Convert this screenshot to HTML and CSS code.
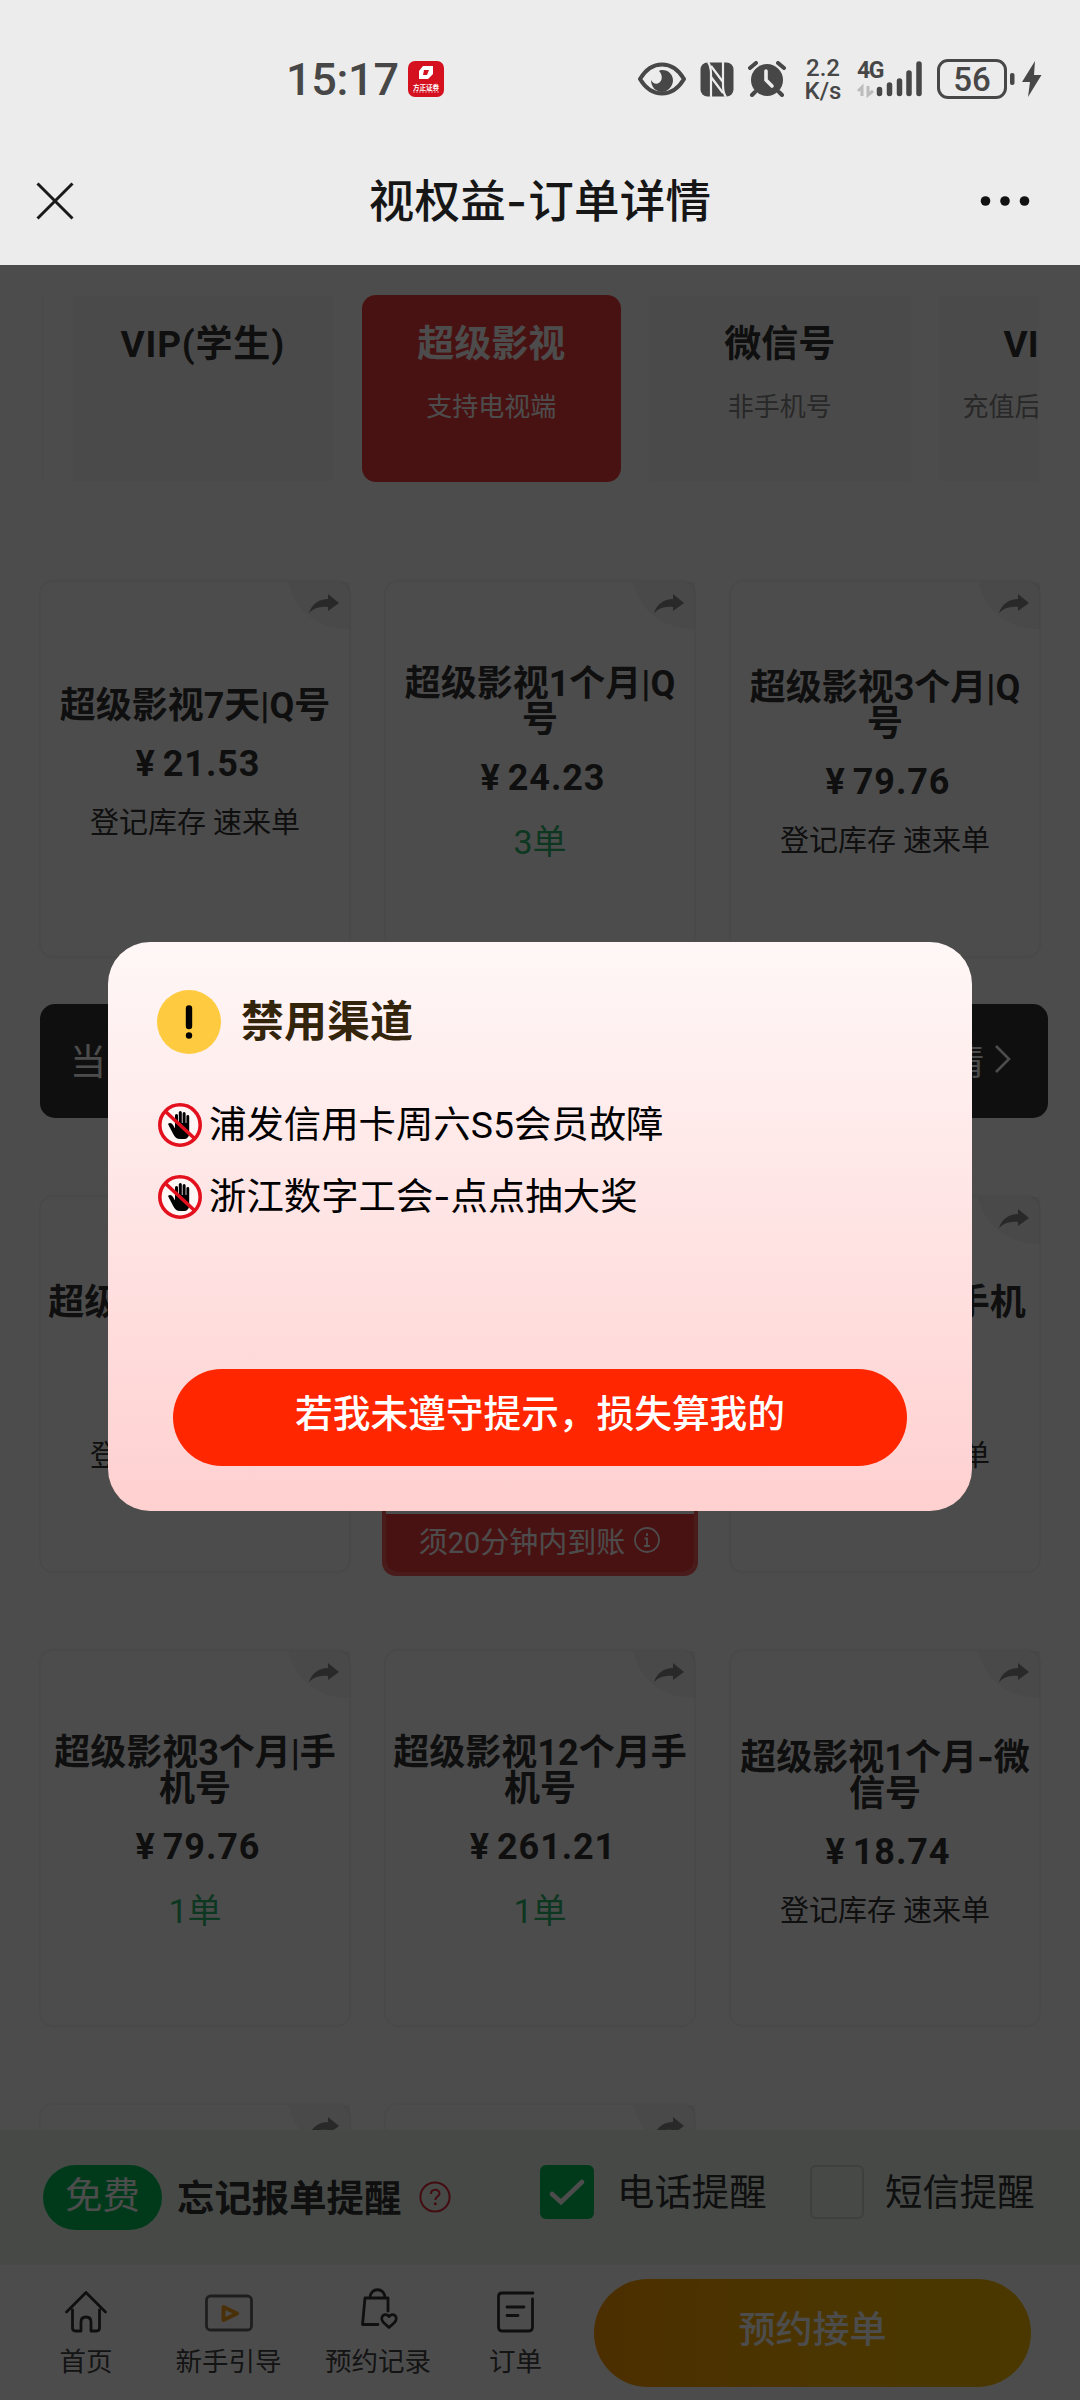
FILE: index.html
```html
<!DOCTYPE html>
<html lang="zh-CN">
<head>
<meta charset="utf-8">
<title>视权益-订单详情</title>
<link rel="stylesheet" href="styles.css">
</head>
<body>
<svg class="defs" width="0" height="0">
  <symbol id="share" viewBox="0 0 62 48">
    <path d="M0 0H62V47H56C27 45 6 27 0 0Z" fill="#000" fill-opacity=".045"/>
    <path d="M21 31C24 22 31 17 40 17V12L51 21L40 29V25C32 24 26 26 21 31Z" fill="#8a8a8a"/>
  </symbol>
  <symbol id="ban" viewBox="0 0 44 44">
    <circle cx="22" cy="22" r="20" fill="#fff6f6"/>
    <path d="M10 21c1.500-2 4-1 5 1l2 3.500V12.500a1.500 1.500 0 0 1 3 0V20h.8V9.500a1.500 1.500 0 0 1 3 0V20h.8V10.500a1.500 1.500 0 0 1 3 0V20h.8V13.500a1.400 1.400 0 0 1 2.800 0V30c0 4-2.500 6-5 6h-4c-3.500 0-5.500-2-7-5z" fill="#000"/>
    <path d="M8 9L36 35" stroke="#e3101d" stroke-width="3.600"/>
    <circle cx="22" cy="22" r="20.200" fill="none" stroke="#e3101d" stroke-width="3.600"/>
  </symbol>
</svg>

<header class="status">
  <div class="status-left">
    <span class="clock">15:17</span>
    <svg class="app" width="36" height="36" viewBox="0 0 36 36"><rect width="36" height="36" rx="7" fill="#d5101f"/><path fill="#fff" fill-rule="evenodd" d="M15 5H25V13L20 18H11V10ZM16 9L15 14H19L21 9Z"/><text x="5" y="28.500" font-size="6.600" textLength="26" fill="#fff" class="app-name">方正证券</text><path d="M5 31H31" stroke="#fff" stroke-opacity=".6" stroke-dasharray="2 1"/></svg>
  </div>
  <div class="status-right">
    <svg width="48" height="34" viewBox="0 0 48 34"><path d="M2 17C8 7 16 2.500 24 2.500S40 7 46 17C40 27 32 31.500 24 31.500S8 27 2 17Z" fill="none" stroke="#474747" stroke-width="4"/><path d="M24 8C31 8 35 13 35 18.500S30 30 24 30S13 25 13 18C15 22 19 23 22 20S24 12 21 9C22 8 23 8 24 8Z" fill="#474747"/></svg>
    <svg class="nfc" width="34" height="35" viewBox="0 0 34 35"><rect x=".5" y=".5" width="33" height="34" rx="7" fill="#474747"/><path d="M8 0Q11 4 11 12V35M26 35Q23 31 23 23V0" fill="none" stroke="#ececec" stroke-width="2.200"/><path d="M11 4L23 20M11 15L23 31" stroke="#ececec" stroke-width="2.200"/></svg>
    <svg class="alarm" width="38" height="36" viewBox="0 0 38 36"><circle cx="19" cy="19" r="16" fill="#474747"/><path d="M7 31L4 34M31 31L34 34M2 7L8 2M36 7L30 2" stroke="#474747" stroke-width="4" stroke-linecap="round"/><path d="M18 10V19L24 25" fill="none" stroke="#ececec" stroke-width="3.600" stroke-linecap="round"/></svg>
    <div class="speed"><span>2.2</span><span>K/s</span></div>
    <div class="signal">
      <svg width="66" height="38" viewBox="0 0 66 38"><path d="M22.500 29.500V33.500M32.500 25V33.500M42.500 21V33.500M52 13V33.500M62 4V33.500" stroke="#474747" stroke-width="5.500" stroke-linecap="round"/><path d="M1 31L5 27V36M11 26V35L16 31" stroke="#bcbcbc" stroke-width="3" fill="none"/></svg>
      <span>4G</span>
    </div>
    <div class="battery"><span>56</span></div>
    <svg class="nub" width="5" height="38" viewBox="0 0 5 38"><rect y="13" width="4.500" height="12" rx="2" fill="#474747"/></svg>
    <svg class="flash" width="20" height="38" viewBox="0 0 20 38"><path d="M13 1L0 22H8L6 37L19.500 15H12Z" fill="#474747"/></svg>
  </div>
</header>

<nav class="titlebar">
  <svg width="38" height="38" viewBox="0 0 38 38"><path d="M1.500 1.500L36.500 36.500M36.500 1.500L1.500 36.500" stroke="#1a1a1a" stroke-width="3"/></svg>
  <h1>视权益<span class="dash">-</span>订单详情</h1>
  <svg width="50" height="12" viewBox="0 0 50 12"><g fill="#111"><circle cx="5.500" cy="6" r="4.800"/><circle cx="25" cy="6" r="4.800"/><circle cx="44.500" cy="6" r="4.800"/></g></svg>
</nav>

<main class="page">
  <section class="scroll">
    <div class="tabs">
      <div class="tab edge"></div>
      <div class="tab"><b class="wide">VIP(学生)</b></div>
      <div class="tab active"><b>超级影视</b><small>支持电视端</small></div>
      <div class="tab"><b>微信号</b><small>非手机号</small></div>
      <div class="tab last"><b>VI</b><small>充值后</small></div>
    </div>

    <div class="grid">
      <article class="card"><svg class="share"><use href="#share"/></svg><h2>超级影视7天|Q号</h2><p class="price"><i>¥</i>21.53</p><p class="stock">登记库存 速来单</p></article>
      <article class="card"><svg class="share"><use href="#share"/></svg><h2>超级影视1个月|Q<br>号</h2><p class="price"><i>¥</i>24.23</p><p class="count">3单</p></article>
      <article class="card"><svg class="share"><use href="#share"/></svg><h2>超级影视3个月|Q<br>号</h2><p class="price"><i>¥</i>79.76</p><p class="stock">登记库存 速来单</p></article>
    </div>

    <div class="banner"><span>当</span><span class="more">情<svg width="18" height="30" viewBox="0 0 18 30"><path d="M2 2L15 15L2 28" fill="none" stroke="#fff" stroke-width="2.600"/></svg></span></div>

    <div class="grid second">
      <article class="card"><svg class="share"><use href="#share"/></svg><h2>超级影视15天手机<br>号</h2><p class="price"><i>¥</i>21.53</p><p class="stock">登记库存 速来单</p></article>
      <article class="card selected"><footer>须20分钟内到账<svg width="28" height="28" viewBox="0 0 28 28"><circle cx="14" cy="14" r="12" fill="none" stroke="#fff" stroke-width="1.800"/><path d="M14 7V10M11.500 12.500H14V20M11 20H17" fill="none" stroke="#fff" stroke-width="1.800"/></svg></footer></article>
      <article class="card"><svg class="share"><use href="#share"/></svg><h2>超级影视7天|手机<br>号</h2><p class="price"><i>¥</i>24.23</p><p class="stock">登记库存 速来单</p></article>
    </div>

    <div class="grid">
      <article class="card"><svg class="share"><use href="#share"/></svg><h2>超级影视3个月|手<br>机号</h2><p class="price"><i>¥</i>79.76</p><p class="count">1单</p></article>
      <article class="card"><svg class="share"><use href="#share"/></svg><h2>超级影视12个月手<br>机号</h2><p class="price"><i>¥</i>261.21</p><p class="count">1单</p></article>
      <article class="card"><svg class="share"><use href="#share"/></svg><h2>超级影视1个月<span class="dash">-</span>微<br>信号</h2><p class="price"><i>¥</i>18.74</p><p class="stock">登记库存 速来单</p></article>
    </div>

    <div class="grid">
      <article class="card"><svg class="share"><use href="#share"/></svg></article>
      <article class="card"><svg class="share"><use href="#share"/></svg></article>
    </div>
  </section>

  <section class="remind">
    <span class="free">免费</span>
    <b>忘记报单提醒</b>
    <svg class="help" width="32" height="32" viewBox="0 0 32 32"><circle cx="16" cy="16" r="14.600" fill="none" stroke="#e02838" stroke-width="2"/><path d="M12 13C12 7.500 20.500 7.500 20.500 12.500C20.500 15.500 16.300 15.500 16.300 19" fill="none" stroke="#e02838" stroke-width="2"/><circle cx="16.300" cy="22.800" r="1.500" fill="#e02838"/></svg>
    <span class="box on"><svg width="54" height="54" viewBox="0 0 54 54"><path d="M12 29L21 37L42 17" fill="none" stroke="#fff" stroke-width="4.600" stroke-linecap="round"/></svg></span>
    <span class="opt">电话提醒</span>
    <span class="box"></span>
    <span class="opt second-opt">短信提醒</span>
  </section>

  <footer class="tabbar">
    <div class="item home"><svg width="48" height="48" viewBox="0 0 48 48"><path d="M4.500 24L24 4.500L43.500 24M10.500 22V40Q10.500 43 13.500 43H19V34Q19 29 24 29T29 34V43H34.500Q37.500 43 37.500 40V22" fill="none" stroke="#333" stroke-width="2.800" stroke-linecap="round" stroke-linejoin="round"/></svg><span>首页</span></div>
    <div class="item guide"><svg width="48" height="48" viewBox="0 0 48 48"><rect x="1.500" y="8" width="45" height="34" rx="4" fill="none" stroke="#66666c" stroke-width="2.800"/><path d="M18.500 19V32L32 25.500Z" fill="none" stroke="#f5a01e" stroke-width="4" stroke-linejoin="round"/></svg><span>新手引导</span></div>
    <div class="item log"><svg width="48" height="48" viewBox="0 0 48 48"><path d="M34 23V10H11L8.500 36.500H24M16 10C16 -1 31 -1 31 10M35 39.500L29.500 34.500C24.500 29 31.500 23.500 35 28.500C38.500 23.500 45.500 29 40.500 34.500Z" fill="none" stroke="#333" stroke-width="2.800" stroke-linejoin="round" stroke-linecap="round"/></svg><span>预约记录</span></div>
    <div class="item order"><svg width="48" height="48" viewBox="0 0 48 48"><path d="M41 5H10Q6.500 5 6.500 8.500V39Q6.500 43 10 43H37Q40.500 43 40.500 39V11M15 19H32M15 27.500H26" fill="none" stroke="#333" stroke-width="2.800" stroke-linecap="round"/></svg><span>订单</span></div>
    <div class="book">预约接单</div>
  </footer>

  <div class="mask">
    <div class="modal">
      <div class="modal-head">
        <svg width="64" height="64" viewBox="0 0 64 64"><circle cx="32" cy="32" r="32" fill="#fecb40"/><path d="M32 18.500V36" stroke="#000" stroke-width="6.400" stroke-linecap="round"/><circle cx="32" cy="45.500" r="3.200"/></svg>
        <h3>禁用渠道</h3>
      </div>
      <ul>
        <li><svg width="44" height="44"><use href="#ban"/></svg><span>浦发信用卡周六S5会员故障</span></li>
        <li><svg width="44" height="44"><use href="#ban"/></svg><span>浙江数字工会<span class="dash">-</span>点点抽大奖</span></li>
      </ul>
      <button>若我未遵守提示，损失算我的</button>
    </div>
  </div>
</main>
</body>
</html>
```
FILE: styles.css
```css
* { box-sizing: border-box; margin: 0; padding: 0; }

body {
  width: 1080px;
  height: 2400px;
  overflow: hidden;
  display: flex;
  flex-direction: column;
  background: #fff;
  color: #333;
  font-family: Roboto, "Noto Sans CJK SC", sans-serif;
}

svg { flex: none; display: block; }
.defs { position: absolute; }
.dash { font-family: Inter, sans-serif; }

/* system status bar */
.status {
  height: 160px;
  background: #ececec;
  color: #474747;
  display: flex;
  justify-content: space-between;
  padding: 0 38px 0 286px;
}
.status-left, .status-right { display: flex; align-items: center; height: 158px; }
.clock { font-size: 45px; line-height: 50px; width: 109px; white-space: nowrap; letter-spacing: -0.3px; font-weight: 500; padding-top: 2px; }
.app { margin-left: 13px; }
.app-name { font-weight: 700; }
.nfc { margin-left: 14px; }
.alarm { margin-left: 14px; }
.speed {
  margin-left: 18px;
  width: 38px;
  display: flex;
  flex-direction: column;
  align-items: center;
  font-size: 24px;
  font-weight: 500;
  line-height: 23px;
  padding-top: 2px;
  white-space: nowrap;
}
.signal { position: relative; margin-left: 15px; }
.signal span { position: absolute; left: 0; top: 0; font-size: 23px; line-height: 22px; font-weight: 700; letter-spacing: -1.5px; }
.battery {
  margin-left: 14px;
  width: 70px;
  height: 40px;
  border: 3px solid #474747;
  border-radius: 11px;
  font-size: 33px;
  font-weight: 500;
  line-height: 35px;
  text-align: center;
}
.nub { margin-left: 3px; }
.flash { margin-left: 7px; }

/* page title bar */
.titlebar {
  height: 105px;
  background: #ececec;
  display: flex;
  align-items: center;
  justify-content: space-between;
  padding: 0 50px 24px 36px;
}
.titlebar h1 { font-size: 45.500px; line-height: 60px; font-weight: 500; letter-spacing: .3px; color: #161616; margin-left: 26px; padding-top: 3px; }
.titlebar .dash { letter-spacing: 1px; }

.page { flex: 1; position: relative; display: flex; flex-direction: column; min-height: 0; }
.scroll { flex: 1; min-height: 0; overflow: hidden; padding-top: 30px; }

/* category tabs */
.tabs { margin: 0 42px; height: 187px; overflow: hidden; display: flex; gap: 29px; align-items: center; }
.tab {
  flex: none;
  width: 259.500px;
  height: 185px;
  background: #f8f8f8;
  display: flex;
  flex-direction: column;
  align-items: center;
  padding-top: 23px;
  white-space: nowrap;
}
.tab.edge { width: 2px; }
.tab b { font-size: 37px; line-height: 52px; font-weight: 700; }
.tab b.wide { letter-spacing: .8px; }
.tab small { font-size: 26px; line-height: 36px; margin-top: 18px; color: #888; }
.tab.last { width: 102px; align-items: flex-start; }
.tab.last b { margin-left: 65px; }
.tab.last small { margin-left: 24px; }
.tab.active { height: 187px; border-radius: 14px; background: #f63c3c; color: #fff; padding-top: 24px; }
.tab.active small { color: #fff; }

/* product cards */
.grid { display: grid; grid-template-columns: repeat(3, 312px); gap: 33px; margin: 98px 39px 0; height: 378px; }
.card {
  position: relative;
  border: 2px solid #f4f4f4;
  border-radius: 14px;
  display: flex;
  flex-direction: column;
  align-items: center;
  justify-content: center;
  white-space: nowrap;
  text-align: center;
  padding-bottom: 6px;
  box-shadow: 0 0 4px rgba(0, 0, 0, .03);
}
.grid + .grid { margin-top: 76px; }
.share { position: absolute; right: -1px; top: 0; width: 62px; height: 48px; }
.card h2 { font-size: 36px; line-height: 36px; font-weight: 700; }
.price { font-size: 36px; line-height: 42px; font-weight: 700; margin-top: 19px; letter-spacing: .9px; padding-left: 6px; }
.price i { font-style: normal; margin-right: 7px; }
.stock { font-size: 29px; line-height: 42px; margin-top: 17px; }
.count { font-size: 34px; line-height: 48px; margin-top: 19px; color: #2fb870; }
.card.selected { border: 4px solid #f95a5a; margin: 0 -2px -3px; padding: 0; justify-content: flex-end; overflow: hidden; }
.selected footer {
  align-self: stretch;
  height: 58px;
  background: #f63c3c;
  color: #fff;
  font-size: 29px;
  display: flex;
  align-items: center;
  justify-content: center;
  gap: 8px;
  padding-bottom: 7px;
}

.banner {
  margin: 46px 32px 0 40px;
  height: 114px;
  border-radius: 15px;
  background: #333;
  color: #fff;
  font-size: 36px;
  display: flex;
  align-items: center;
  justify-content: space-between;
  padding: 0 36px 5px 30px;
}
.more { display: flex; align-items: center; gap: 10px; }
.grid.second { margin-top: 77px; }

/* reminder options */
.remind {
  height: 135px;
  background: #e9f5ec;
  display: flex;
  align-items: center;
  padding: 0 0 1px 43px;
  font-size: 37.400px;
  white-space: nowrap;
}
.free { width: 119px; height: 65px; border-radius: 33px; background: #00c45a; color: #fff; line-height: 63px; text-align: center; }
.remind b { margin-left: 15px; width: 226px; padding-bottom: 3px; }
.help { margin-left: 16px; }
.box { width: 54px; height: 54px; border: 2px solid #d0d4d1; border-radius: 6px; margin: 0 0 10px 45px; }
.box.on { border: 0; background: #00c45a; margin-left: 89px; }
.opt { margin: 0 0 15px 23px; width: 148px; }
.second-opt { margin-left: 21px; }

/* bottom tab bar */
.tabbar { height: 135px; position: relative; display: flex; padding-left: 26px; background: #fff; color: #444; }
.item { display: flex; flex-direction: column; align-items: center; padding-top: 23px; font-size: 26.500px; line-height: 36px; white-space: nowrap; }
.item span { margin-top: 8px; }
.home { width: 120px; }
.guide { width: 165px; }
.log { width: 134px; }
.order { width: 141px; }
.book {
  margin: 14px 0 0 8px;
  width: 437px;
  height: 108px;
  border-radius: 54px;
  background: linear-gradient(90deg, #ff9c00, #fbb000 45%, #f8bc00);
  color: #fff;
  font-size: 37px;
  font-weight: 500;
  line-height: 104px;
  text-align: center;
}

/* dialog */
.mask {
  position: absolute;
  inset: 0;
  background: rgba(0, 0, 0, .7);
  display: flex;
  flex-direction: column;
  align-items: center;
  padding-top: 677px;
}
.modal {
  width: 864px;
  height: 569px;
  border-radius: 42px;
  background: linear-gradient(#fff7f7, #ffd0d0);
  padding: 48px 49px 0;
  display: flex;
  flex-direction: column;
}
.modal-head { display: flex; align-items: center; gap: 20px; }
.modal h3 { font-size: 43px; line-height: 60px; font-weight: 700; color: #33240c; }
.modal ul { list-style: none; margin-top: 35px; }
.modal li { display: flex; align-items: center; height: 72px; font-size: 37.400px; color: #000; white-space: nowrap; }
.modal li > span { padding-bottom: 6px; }
.modal li svg { margin: 0 7px 0 1px; }
.modal button {
  margin: 136px auto 0;
  width: 734px;
  height: 97px;
  border: 0;
  border-radius: 49px;
  background: #ff2600;
  color: #fff;
  font: 500 37.700px/54px Roboto, "Noto Sans CJK SC", sans-serif;
  padding-bottom: 7px;
}
```
